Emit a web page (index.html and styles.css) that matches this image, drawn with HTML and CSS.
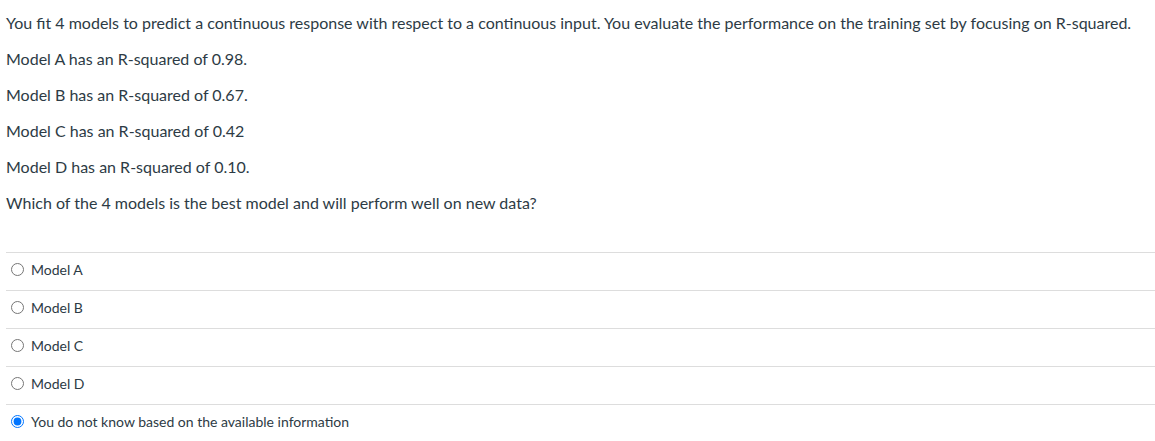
FILE: index.html
```html
<!DOCTYPE html>
<html lang="en">
<head>
<meta charset="utf-8">
<title>Question</title>
<link rel="stylesheet" href="styles.css">
</head>
<body>
<div class="question">
  <div class="question-text">
    <p>You fit 4 models to predict a continuous response with respect to a continuous input. You evaluate the performance on the training set by focusing on R-squared.</p>
    <p>Model A has an R-squared of 0.98.</p>
    <p>Model B has an R-squared of 0.67.</p>
    <p>Model C has an R-squared of 0.42</p>
    <p>Model D has an R-squared of 0.10.</p>
    <p>Which of the 4 models is the best model and will perform well on new data?</p>
  </div>
  <div class="answers">
    <label class="answer"><input type="radio" name="q"><span>Model A</span></label>
    <label class="answer"><input type="radio" name="q"><span>Model B</span></label>
    <label class="answer"><input type="radio" name="q"><span>Model C</span></label>
    <label class="answer"><input type="radio" name="q"><span>Model D</span></label>
    <label class="answer"><input type="radio" name="q" checked><span>You do not know based on the available information</span></label>
  </div>
</div>
</body>
</html>
```

FILE: styles.css
```css
html, body {
  margin: 0;
  padding: 0;
  background: #fff;
}
body {
  font-family: Lato, "Open Sans", sans-serif;
  color: #2d3b45;
}
.question {
  padding: 0 0 0 6px;
}
.question-text {
  padding-top: 11px;
  font-size: 16px;
  line-height: 24px;
}
.question-text p {
  margin: 0 0 12px 0;
}
.answers {
  margin-top: 37px;
}
.answer {
  display: flex;
  align-items: center;
  height: 33px;
  padding-bottom: 4px;
  border-top: 1px solid #dddddd;
  font-size: 14px;
  cursor: pointer;
}
.answer input {
  margin: 0 7px 0 5px;
  width: 13px;
  height: 13px;
}
```
